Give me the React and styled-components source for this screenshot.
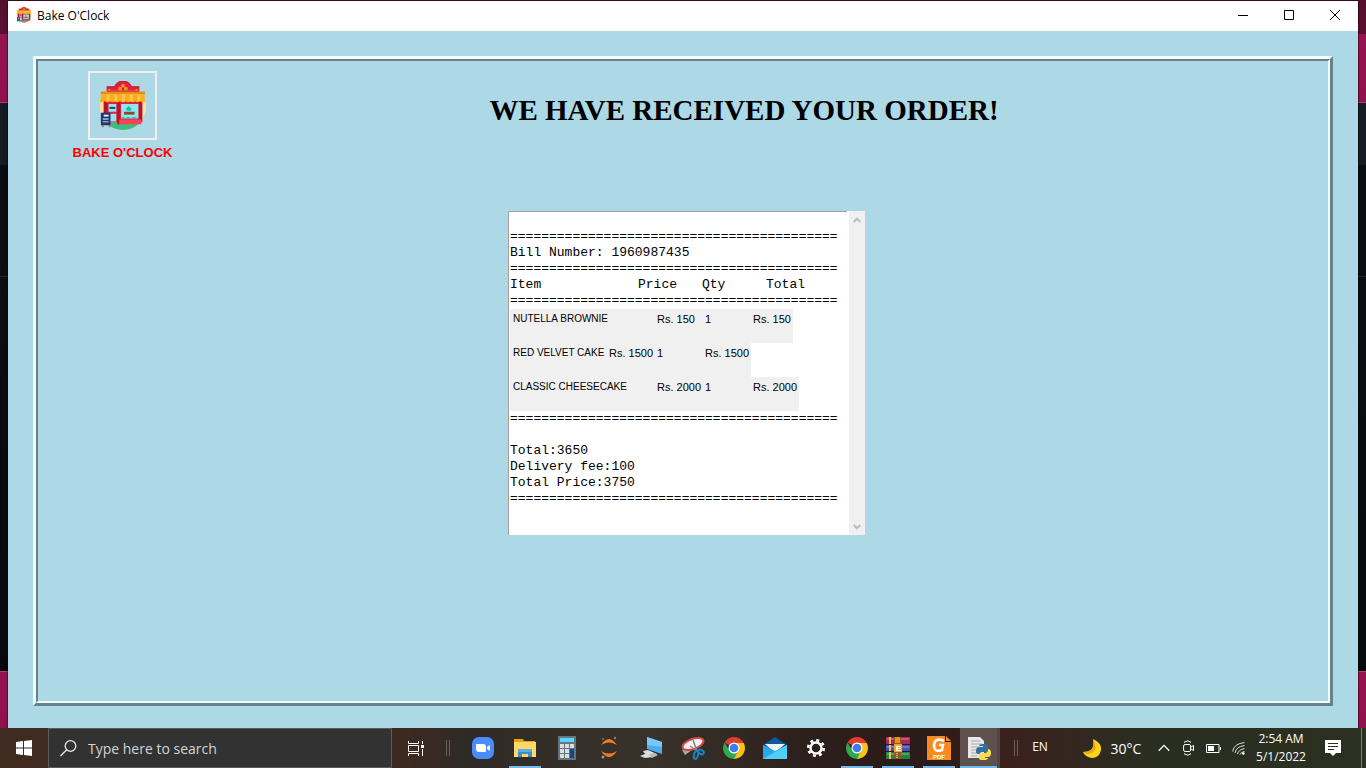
import React from "react";
import styled, { createGlobalStyle, css } from "styled-components";

const ui = '"Open Sans", "Noto Sans", sans-serif';

const GlobalStyle = createGlobalStyle`
  * { box-sizing: border-box; }
  body { margin: 0; font-family: ${ui}; color: #000; }
  button { border: 0; padding: 0; background: none; font: inherit; color: inherit; }
  svg { display: block; flex: none; }
`;

const Screen = styled.div`
  min-height: 100vh;
  display: flex;
  flex-direction: column;
`;

const Desktop = styled.div`
  flex: 1;
  display: flex;
  padding: 1px 8px 0;
  background: linear-gradient(
    #55102f 0, #5c0f30 34px, #961350 34px, #8f124c 102px, #b0406f 102px, #b0406f 103px,
    #171b24 103px, #171b24 165px, #090c11 165px, #0b0d12 276px, #22252b 276px, #22252b 277px,
    #0b0d12 277px, #07090c calc(100% - 57px), #b0406f calc(100% - 57px), #b0406f calc(100% - 56px),
    #961350 calc(100% - 56px), #8f124c 100%
  );
`;

const AppWindow = styled.div`
  flex: 1;
  display: flex;
  flex-direction: column;
  background: #add8e6;
  box-shadow: 0 0 2px #000;
`;

const TitleBar = styled.header`
  height: 30px;
  display: flex;
  align-items: center;
  padding: 0 0 2px 8px;
  gap: 5px;
  background: #fff;
  font-size: 12px;
`;

const WindowControls = styled.div`
  margin-left: auto;
  display: flex;
`;

const ControlButton = styled.button`
  width: 46px;
  height: 28px;
  display: grid;
  place-items: center;
`;

const Ridge = styled.main`
  flex: 1;
  display: flex;
  margin: 25px 25px 22px;
  border: 3px solid;
  border-color: #f0fcff #68828a #68828a #f0fcff;
`;

const RidgeInner = styled.div`
  flex: 1;
  border: 2px solid;
  border-color: #68828a #f0fcff #f0fcff #68828a;
  padding-top: 10px;
`;

const Banner = styled.div`
  display: grid;
  grid-template-columns: 169px 1fr 47px;
  align-items: start;
`;

const Brand = styled.div`
  display: flex;
  flex-direction: column;
  align-items: center;
  gap: 5px;
  color: #f00;
  font: bold 13px/16px "Liberation Sans", Arial, sans-serif;
`;

const LogoBox = styled.div`
  width: 69px;
  height: 69px;
  display: grid;
  place-items: center;
  border: 2px solid #f0f0f0;
`;

const Heading = styled.h1`
  margin: 22px 0 0;
  text-align: center;
  font: bold 29px/34px "Liberation Serif", "Times New Roman", serif;
`;

const Receipt = styled.section`
  width: 357px;
  height: 324px;
  margin: 50px 0 0 calc(50% - 175px);
  display: flex;
  gap: 2px;
  background: #fff;
`;

const Paper = styled.div`
  flex: 1;
  padding: 1px;
  border: solid #a0a0a0;
  border-width: 1px 0 0 1px;
  font: 13px/16px "Liberation Mono", "Courier New", monospace;
  white-space: pre;
`;

const Line = styled.div`
  height: 16px;
`;

const Bill = styled.table`
  display: block;
  border-spacing: 0;

  thead, tbody { display: block; }
  th, td { padding: 0; font-weight: normal; text-align: left; }
`;

const HeadRow = styled.tr`
  display: grid;
  grid-template-columns: 128px 64px 64px 1fr;
  height: 16px;
`;

const ItemRow = styled.tr`
  display: grid;
  grid-template-columns: ${(p) => (p.$compact ? "96px 48px 48px 1fr" : "144px 48px 48px 1fr")};
  width: fit-content;
  height: 34px;
  padding: 2px 2px 2px 3px;
  background: #f0f0f0;
  font: 11px/16px "Liberation Sans", Arial, sans-serif;
`;

const ItemName = styled.td`
  font-size: 10px;
`;

const ScrollTrack = styled.div`
  width: 16px;
  display: flex;
  flex-direction: column;
  justify-content: space-between;
  background: #f0f0f0;
`;

const ScrollButton = styled.button`
  height: 17px;
  display: grid;
  place-items: center;
`;

const Taskbar = styled.footer`
  height: 40px;
  display: flex;
  align-items: center;
  color: #fff;
  background: linear-gradient(90deg, #402b20 0, #3c2920 30%, #302a26 34%, #37322a 48%, #2c1e1b 60%, #2b1b19 68%, #3b211c 74%, #35251f 77%, #2a2e20 84%, #2b3021 100%);
`;

const StartButton = styled.button`
  width: 48px;
  height: 40px;
  display: grid;
  place-items: center;
`;

const Search = styled.label`
  width: 344px;
  height: 40px;
  display: flex;
  align-items: center;
  gap: 11px;
  padding-left: 11px;
  border: 1px solid #5b5b5b;
  background: #323232;

  input {
    flex: 1;
    min-width: 0;
    padding: 1px 0 0;
    border: 0;
    outline: 0;
    background: none;
    color: #fff;
    font: 14px/20px ${ui};
  }
  input::placeholder { color: #d4d4d4; opacity: 1; }
`;

const Grip = styled.div`
  width: 4px;
  height: 16px;
  border: solid #6a625c;
  border-width: 0 1px;
`;

const TaskGroup = styled.nav`
  display: flex;
  gap: ${(p) => p.$gap}px;
  margin-left: ${(p) => p.$offset}px;
`;

const TaskButton = styled.button`
  width: 40px;
  height: 40px;
  display: flex;
  flex-direction: column;
  align-items: center;
  justify-content: center;
  ${(p) => p.$open && css`
    background: linear-gradient(#76b9ed, #76b9ed) center bottom / 32px 2px no-repeat;
  `}
  ${(p) => p.$active && css`
    border-right: 3px solid #534744;
    background: linear-gradient(#76b9ed, #76b9ed) center bottom / 100% 2px no-repeat #5f504e;
  `}
`;

const Tray = styled.div`
  margin-left: auto;
  display: flex;
  align-items: center;
  font-size: 12px;
`;

const TrayButton = styled.button`
  width: ${(p) => p.$w}px;
  height: 40px;
  display: flex;
  align-items: center;
  justify-content: center;
`;

const Language = styled(TrayButton)`
  padding: 0 10px 4px 0;
`;

const Weather = styled(TrayButton)`
  gap: 10px;
  font-size: 14px;
`;

const Clock = styled(TrayButton)`
  flex-direction: column;
  font-size: 12px;
  line-height: 18px;
`;

const ShowDesktop = styled.button`
  width: 5px;
  height: 40px;
  margin-left: 6px;
  border-left: 1px solid #7d8077;
`;

function ShopIcon({ size }) {
  return (
    <svg width={size} height={size} viewBox="0 0 48 52" aria-hidden="true">
      <circle cx="24" cy="27" r="24" fill="#fbe3a0" />
      <path d="M6 43h36q-7 8-18 8T6 43z" fill="#3dbd7d" />
      <path d="M7 10V6h8q3-6 9-6t9 6h8v4z" fill="#e2203c" />
      <path d="M7 10h34v2H7z" fill="#b8122e" />
      <path d="M7 6h8q3-6 9-6t9 6h8" fill="none" stroke="#b8122e" />
      <circle cx="24" cy="5" r="2" fill="#f7931e" /><circle cx="21" cy="8" r="2" fill="#f7931e" /><circle cx="27" cy="8" r="2" fill="#f7931e" />
      <circle cx="10" cy="9" r="1" fill="#f7931e" /><circle cx="38" cy="9" r="1" fill="#f7931e" />
      <path d="M4 20h40v23H4z" fill="#e2203c" />
      <path d="M4 20h4v23H4zM18 20h3v25h-3zM40 20h4v22h-4z" fill="#b8122e" />
      <path d="M20 40h23v5H20z" fill="#ff4157" />
      <path d="M1 11h46v3H1z" fill="#ef8a12" />
      <path d="M2 14h44l1 7q-3 2-5 0-3 2-5 0-3 2-5 0-3 2-5 0-3 2-6 0-3 2-5 0-3 2-5 0-3 2-6 0-3 2-5 0z" fill="#ffad0f" />
      <path d="M7 14h3v7H7zM15 14h3v7h-3zM23 14h3v7h-3zM31 14h3v7h-3zM39 14h3v7h-3z" fill="#f5c560" />
      <path d="M9 24h8v8H9zM9 34h8v8H9zM22 24h18v15H22z" fill="#8ce8ed" />
      <path d="M10 27h6v2h-6z" fill="#243b7c" />
      <path d="m30 26 3 3-1 2h-4l-1-2zM22 39q2-3 5 0 2-3 5 0 2-3 8 0z" fill="#20bda9" />
      <path d="M25 32h11v3H25z" fill="#93452f" />
      <path d="M2 45h2v3H2zM9 45h2v3H9z" fill="#c97d52" />
      <path d="M1 33h10v13H1z" fill="#223876" />
      <path d="M4 35h5v2H4zM3 39h6v1H3zM3 42h6v1H3z" fill="#fff" />
    </svg>
  );
}

const Zoom = () => (
  <svg width="24" height="24" viewBox="0 0 24 24">
    <rect x="1" y="1" width="22" height="22" rx="7" fill="#4a8cff" />
    <path d="M5 8h7q3 0 3 3v5H8q-3 0-3-3zM16 11l3-2v6l-3-2z" fill="#fff" />
  </svg>
);
const Folder = () => (
  <svg width="24" height="24" viewBox="0 0 24 24">
    <path d="M1 3h9l1 2h11v16H1z" fill="#e5a50a" />
    <path d="M1 6h22v15H1z" fill="#ffd867" />
    <path d="M5 13h14v8h-4v-3H9v3H5z" fill="#3d8fcc" />
    <path d="M5 13h14v3H5z" fill="#5aaee2" />
  </svg>
);
const Calculator = () => (
  <svg width="24" height="24" viewBox="0 0 24 24">
    <path d="M3 0h18v24H3z" fill="#66747f" />
    <path d="M5 2h14v4H5z" fill="#5bd5f7" />
    <path d="M5 8h4v4H5zM10 8h4v4h-4zM15 8h4v4h-4zM5 13h4v4H5zM10 13h4v4h-4zM5 18h4v4H5zM10 18h4v4h-4z" fill="#d9dee2" />
    <path d="M15 13h4v9h-4z" fill="#174a85" />
  </svg>
);
const Jupyter = () => (
  <svg width="24" height="24" viewBox="0 0 24 24">
    <path d="M4 9q8-12 16 0-8-5-16 0zM4 15q8 12 16 0-8 5-16 0z" fill="#f37726" />
    <circle cx="18" cy="2" r="1.2" fill="#888" /><circle cx="6" cy="3" r="1" fill="#777" /><circle cx="6" cy="21" r="1.5" fill="#999" />
  </svg>
);
const Monitor = () => (
  <svg width="24" height="24" viewBox="0 0 24 24">
    <path d="M8 1 23 6v12L8 13z" fill="#49aef0" />
    <path d="M8 1 23 6v5L8 9z" fill="#77c7fa" />
    <path d="m4 15 5-1 9 4-4 3-8 1-5-2 5-2z" fill="#dadde0" />
    <path d="m10 19 5-2 4 2-6 3z" fill="#b4babf" />
  </svg>
);
const Snip = () => (
  <svg width="24" height="24" viewBox="0 0 24 24">
    <path d="m1 14 3 5 7-5-2-3z" fill="#a8a8ad" />
    <ellipse cx="12" cy="8" rx="11" ry="5" transform="rotate(-20 12 8)" fill="#f3f3f5" stroke="#d44848" strokeWidth="2" />
    <path d="m12 4 4 11M9 10l9 6" stroke="#85858a" strokeWidth="1.500" />
    <ellipse cx="15" cy="19" rx="2" ry="4" transform="rotate(15 15 19)" fill="none" stroke="#1884c7" strokeWidth="2" />
    <ellipse cx="20" cy="16" rx="3" ry="2" transform="rotate(35 20 16)" fill="none" stroke="#1884c7" strokeWidth="2" />
  </svg>
);
const Chrome = () => (
  <svg width="24" height="24" viewBox="0 0 24 24">
    <path d="M12 12 2.5 6.5A11 11 0 0 1 21.500 6.500z" fill="#e33b2e" />
    <path d="M12 12V7h9.800A11 11 0 0 1 12 23z" fill="#fbc116" />
    <path d="M12 12l4 3-4 8A11 11 0 0 1 2.500 6.500l5 8z" fill="#2da94f" />
    <circle cx="12" cy="12" r="5.500" fill="#fff" />
    <circle cx="12" cy="12" r="4.300" fill="#3b7ded" />
  </svg>
);
const Mail = () => (
  <svg width="24" height="24" viewBox="0 0 24 24">
    <path d="m0 9 12-8 12 8v4H0z" fill="#0c59a4" />
    <path d="M2 8h20l-10 9z" fill="#f1f3f5" />
    <path d="m0 9 12 6 12-6v14H0z" fill="#28a8ea" />
    <path d="M0 23 24 9v14z" fill="#50d0f8" />
  </svg>
);
const Gear = () => (
  <svg width="20" height="20" viewBox="0 0 20 20">
    <circle cx="10" cy="10" r="5.500" fill="none" stroke="#fff" strokeWidth="2.500" />
    <circle cx="10" cy="10" r="7.800" fill="none" stroke="#fff" strokeWidth="2.600" strokeDasharray="3.060 3.060" />
  </svg>
);
const Rar = () => (
  <svg width="24" height="24" viewBox="0 0 24 24">
    <path d="M0 1h24v7H0z" fill="#b32452" /><path d="M0 9h24v6H0z" fill="#4550b8" /><path d="M0 16h24v7H0z" fill="#27813f" />
    <path d="M1 3h22M1 11h22M1 18h22" stroke="#ffffff77" />
    <path d="M3 1h2v7H3zM3 9h2v6H3zM3 16h2v7H3z" fill="#e2c060" />
    <path d="M8 1h7v22H8z" fill="#8d5b25" /><path d="M9 1h5v6H9z" fill="#f28c1c" />
    <path d="M8 8h8v8H8z" fill="#f3a52c" /><path d="M10 10h5v1h-3v1h3v1h-3v1h3v1h-5z" fill="#fff6db" />
    <path d="M11 17v6" stroke="#d8b46a" strokeWidth="2" strokeDasharray="1 1" />
  </svg>
);
const PdfG = () => (
  <svg width="24" height="24" viewBox="0 0 24 24">
    <path d="M0 0h18v6h6v18H0z" fill="#f78b1f" /><path d="m19 0 5 5h-5z" fill="#f78b1f" />
    <path d="M17 5q-9-4-10 4 0 8 8 5l1-5h-4" fill="none" stroke="#fff" strokeWidth="2.600" />
    <text x="12" y="23" textAnchor="middle" fontFamily="Liberation Sans" fontWeight="bold" fontSize="6" fill="#fff">PDF</text>
  </svg>
);
const Python = () => (
  <svg width="24" height="24" viewBox="0 0 24 24">
    <path d="M1 1h12l4 4v17H1z" fill="#e8e8e8" />
    <path d="M4 5h9M4 8h11M4 11h8M4 14h6M4 17h6M4 20h6" stroke="#aaa" />
    <path d="M16 8h3q2 0 2 2v4q0 2-2 2h-4q-2 0-2 2h-2q-2 0-2-3 0-4 3-4h4v-1h-4q0-2 4-2z" fill="#31709f" />
    <path d="M17 24h-3q-2 0-2-2v-3q0-2 2-2h4q3 0 3-4 3 0 3 4t-3 4h-3v1h3q0 2-4 2z" fill="#ffdb4d" />
  </svg>
);

const pinned = [
  { name: "Zoom", icon: Zoom },
  { name: "File Explorer", icon: Folder, open: true },
  { name: "Calculator", icon: Calculator },
  { name: "Jupyter", icon: Jupyter },
  { name: "Remote Desktop", icon: Monitor },
  { name: "Snipping Tool", icon: Snip },
];
const running = [
  { name: "Chrome", icon: Chrome },
  { name: "Mail", icon: Mail },
  { name: "Settings", icon: Gear },
  { name: "Chrome window", icon: Chrome, open: true },
  { name: "WinRAR", icon: Rar, open: true },
  { name: "PDF reader", icon: PdfG, open: true },
  { name: "Python", icon: Python, active: true },
];

const items = [
  { name: "NUTELLA BROWNIE", price: "Rs. 150", qty: "1", total: "Rs. 150" },
  { name: "RED VELVET CAKE", price: "Rs. 1500", qty: "1", total: "Rs. 1500", compact: true },
  { name: "CLASSIC CHEESECAKE", price: "Rs. 2000", qty: "1", total: "Rs. 2000" },
];

const rule = "=".repeat(42);

function Tasks({ list, gap, offset, label }) {
  return (
    <TaskGroup $gap={gap} $offset={offset} aria-label={label}>
      {list.map(({ name, icon: Icon, open, active }) => (
        <TaskButton key={name} aria-label={name} $open={open} $active={active}><Icon /></TaskButton>
      ))}
    </TaskGroup>
  );
}

export default function App() {
  return (
    <Screen>
      <GlobalStyle />
      <Desktop>
        <AppWindow>
          <TitleBar>
            <ShopIcon size={16} />
            <span>Bake O'Clock</span>
            <WindowControls>
              <ControlButton aria-label="Minimize">
                <svg width="10" height="10"><path d="M0 5.500h10" stroke="#000" /></svg>
              </ControlButton>
              <ControlButton aria-label="Maximize">
                <svg width="10" height="10"><path d="M.5.5h9v9h-9z" fill="none" stroke="#000" /></svg>
              </ControlButton>
              <ControlButton aria-label="Close">
                <svg width="10" height="10"><path d="m0 0 10 10M10 0 0 10" stroke="#000" /></svg>
              </ControlButton>
            </WindowControls>
          </TitleBar>
          <Ridge>
            <RidgeInner>
              <Banner>
                <Brand>
                  <LogoBox><ShopIcon size={50} /></LogoBox>
                  <span>BAKE O'CLOCK</span>
                </Brand>
                <Heading>WE HAVE RECEIVED YOUR ORDER!</Heading>
              </Banner>
              <Receipt aria-label="Bill">
                <Paper>
                  <Line />
                  <Line>{rule}</Line>
                  <Line>Bill Number: 1960987435</Line>
                  <Line>{rule}</Line>
                  <Bill>
                    <thead>
                      <HeadRow><th>Item</th><th>Price</th><th>Qty</th><th>Total</th></HeadRow>
                      <tr><td colSpan={4}>{rule}</td></tr>
                    </thead>
                    <tbody>
                      {items.map((item) => (
                        <ItemRow key={item.name} $compact={item.compact}>
                          <ItemName>{item.name}</ItemName><td>{item.price}</td><td>{item.qty}</td><td>{item.total}</td>
                        </ItemRow>
                      ))}
                    </tbody>
                  </Bill>
                  <Line>{rule}</Line>
                  <Line />
                  <Line>Total:3650</Line>
                  <Line>Delivery fee:100</Line>
                  <Line>Total Price:3750</Line>
                  <Line>{rule}</Line>
                </Paper>
                <ScrollTrack>
                  <ScrollButton aria-label="Scroll up">
                    <svg width="8" height="6"><path d="m.7 5 3.300-3.300L7.300 5" fill="none" stroke="#bdbdbd" strokeWidth="2" /></svg>
                  </ScrollButton>
                  <ScrollButton aria-label="Scroll down">
                    <svg width="8" height="6"><path d="M.7 1 4 4.300 7.300 1" fill="none" stroke="#bdbdbd" strokeWidth="2" /></svg>
                  </ScrollButton>
                </ScrollTrack>
              </Receipt>
            </RidgeInner>
          </Ridge>
        </AppWindow>
      </Desktop>
      <Taskbar>
        <StartButton aria-label="Start">
          <svg width="16" height="16" viewBox="0 0 16 16"><path d="m0 2 7-1v6.500H0zM8 1l8-1v7.500H8zM0 8.500h7V15l-7-1zM8 8.500h8V16l-8-1z" fill="#fff" /></svg>
        </StartButton>
        <Search>
          <svg width="17" height="17" viewBox="0 0 17 17"><circle cx="10.500" cy="6" r="5.300" fill="none" stroke="#e8e8e8" strokeWidth="1.300" /><path d="M6.700 9.800.5 16" stroke="#e8e8e8" strokeWidth="1.300" /></svg>
          <input type="text" aria-label="Search" placeholder="Type here to search" />
        </Search>
        <StartButton aria-label="Task View">
          <svg width="16" height="15" viewBox="0 0 16 15"><path d="M.5 0v2.500h10V0M.5 15v-2.500h10V15M.5 4.500h10v6H.5zM14.500 0v3M14.500 8v7" fill="none" stroke="#fff" /><path d="M13 4h3v3h-3z" fill="#fff" /></svg>
        </StartButton>
        <TaskGroup $gap={0} $offset={6} aria-label="Toolbar"><Grip /></TaskGroup>
        <Tasks list={pinned} gap={2} offset={13} label="Pinned" />
        <Tasks list={running} gap={1} offset={1} label="Running" />
        <Tray>
          <Grip />
          <Language $w={54}>EN</Language>
          <Weather $w={80}>
            <svg width="18" height="19" viewBox="0 0 18 19"><path d="M10 0q9 4 8 11-2 8-9 8-7-1-9-6 13 0 10-13z" fill="#ffd21c" /><path d="M0 13q13 0 10-13 7 14-6 15z" fill="#f2a60c" /></svg>
            30°C
          </Weather>
          <TrayButton $w={24} aria-label="Show hidden icons">
            <svg width="12" height="8"><path d="m.7 6.700 5.300-5.300 5.300 5.300" fill="none" stroke="#fff" strokeWidth="1.300" /></svg>
          </TrayButton>
          <TrayButton $w={25} aria-label="Meet Now">
            <svg width="12" height="16" viewBox="0 0 12 16"><rect x=".6" y="4.500" width="7" height="7" rx="1.500" fill="none" stroke="#fff" /><path d="m8 7 2.500-1.500v5L8 9M1 2.300q4-3 7 0M1 13.700q4 3 7 0" fill="none" stroke="#fff" /></svg>
          </TrayButton>
          <TrayButton $w={24} aria-label="Battery">
            <svg width="15" height="9" viewBox="0 0 15 9"><path d="M.5.5h12.500v8H.5zM14.500 3v3" fill="none" stroke="#fff" /><path d="M2 2h6v5H2z" fill="#fff" /></svg>
          </TrayButton>
          <TrayButton $w={26} aria-label="Network">
            <svg width="13" height="13" viewBox="0 0 13 13"><path d="M.6 9.500Q2 1.500 12.500.6M3 11Q4 4.500 12.500 3.600M5.500 12Q6.500 7.500 12.500 6.600M8 12.500Q9 10 12.500 9.500" fill="none" stroke="#ddd" /><circle cx="11.300" cy="11.500" r="1.300" fill="#fff" /></svg>
          </TrayButton>
          <Clock $w={60}><span>2:54 AM</span><span>5/1/2022</span></Clock>
          <TrayButton $w={44} aria-label="Notifications">
            <svg width="16" height="16" viewBox="0 0 16 16"><path d="M0 0h16v13h-5l-3 3-3-3H0z" fill="#fff" /><path d="M3 3.500h10M3 6.500h10M3 9.500h6" stroke="#2b3021" /></svg>
          </TrayButton>
          <ShowDesktop aria-label="Show desktop" />
        </Tray>
      </Taskbar>
    </Screen>
  );
}
